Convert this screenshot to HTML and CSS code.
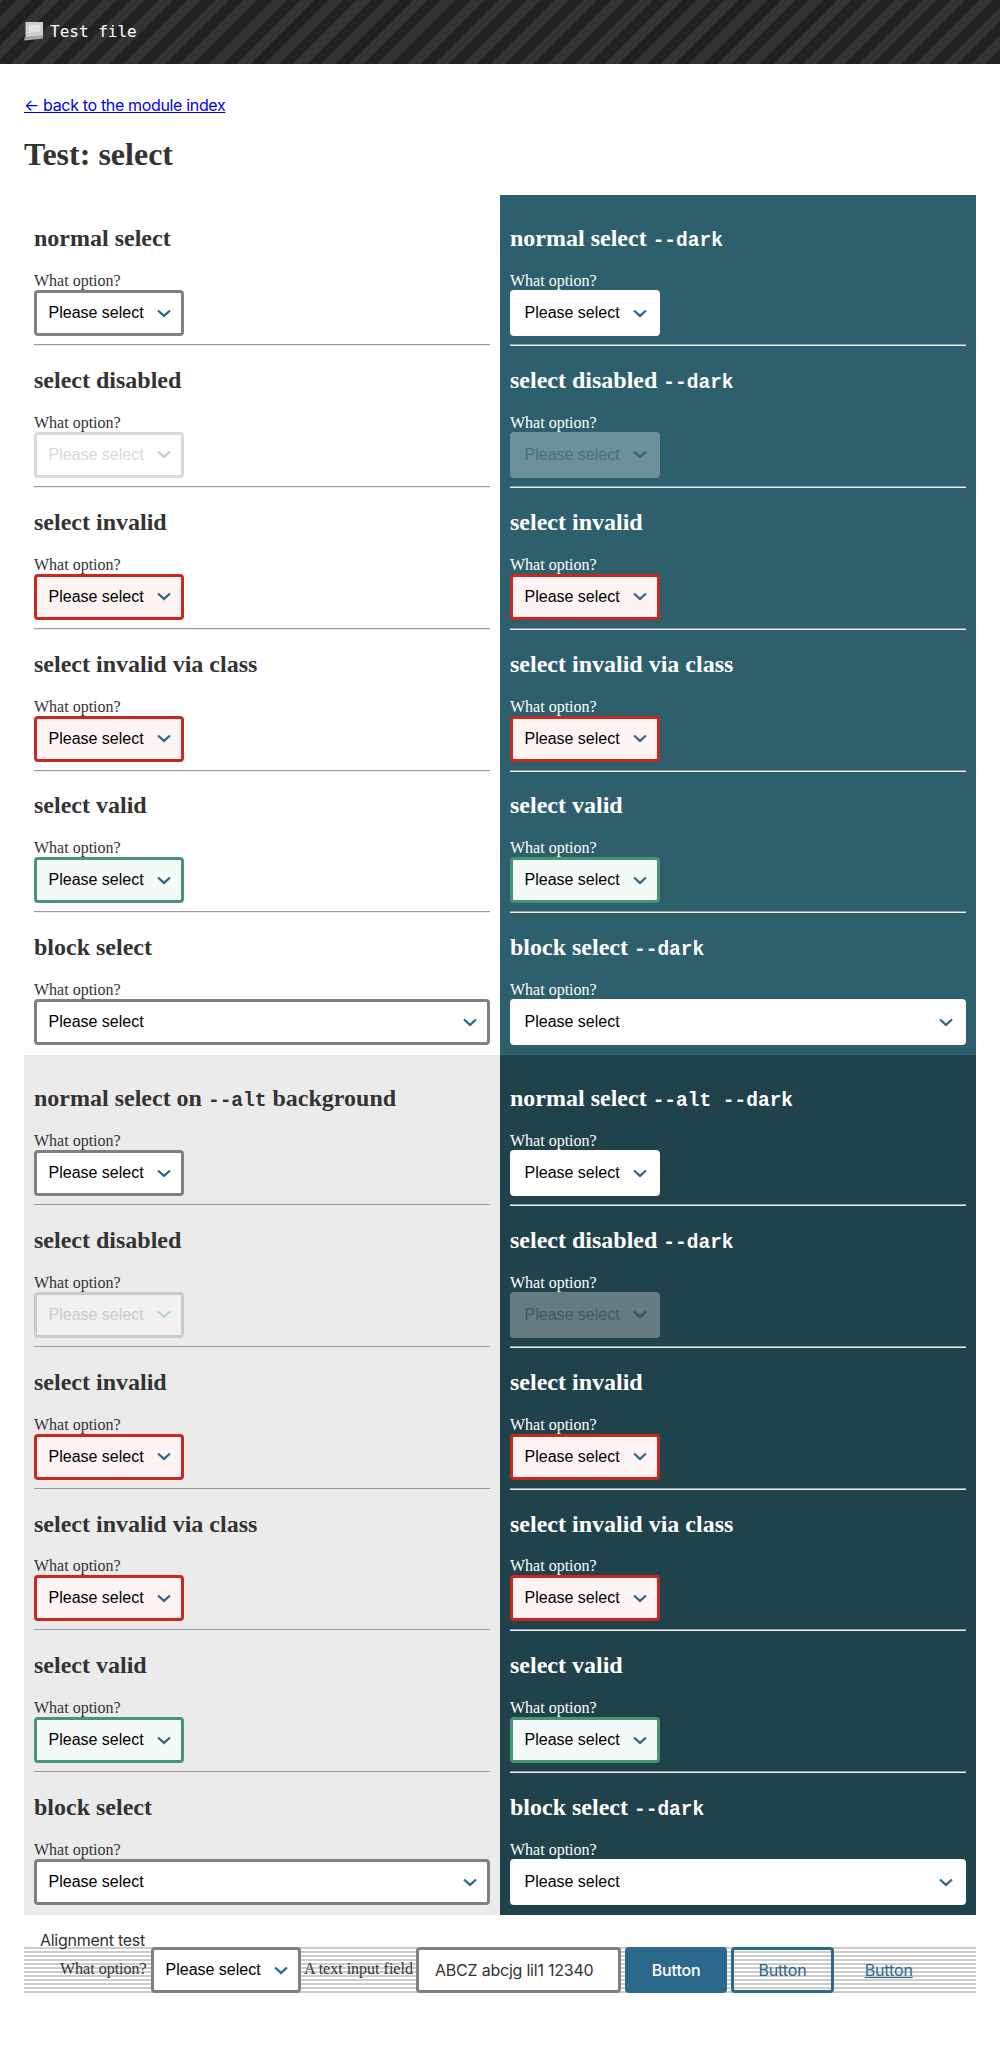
FILE: index.html
```html
<!DOCTYPE html>
<html lang="en">
<head>
<meta charset="utf-8">
<title>Test: select</title>
<link rel="stylesheet" href="styles.css">
</head>
<body>
<header class="banner">
  <svg class="banner-icon" viewBox="0 0 20 20" aria-hidden="true"><path d="M1.5 1h17.500v14L1.500 16z" fill="#d2d2d2"/><path d="M4 3h13v8.500L4 12.500z" fill="#e2e2e2" stroke="#c3c3c3"/><path d="M.5 16.500L19 13.500v4L.5 19.500z" fill="#b0b0b0"/><path d="M.5 18l18.500-2.500" stroke="#999"/></svg>
  <span>Test file</span>
</header>
<main class="page">
  <a class="back" href="#">← back to the module index</a>
  <h1>Test: select</h1>
  <div class="grid">
    <section class="cell">
      <h2>normal select</h2><label>What option?</label><select class="select"><option>Please select</option></select><hr>
      <h2>select disabled</h2><label>What option?</label><select class="select" disabled><option>Please select</option></select><hr>
      <h2>select invalid</h2><label>What option?</label><select class="select invalid"><option>Please select</option></select><hr>
      <h2>select invalid via class</h2><label>What option?</label><select class="select invalid"><option>Please select</option></select><hr>
      <h2>select valid</h2><label>What option?</label><select class="select valid"><option>Please select</option></select><hr>
      <h2>block select</h2><label>What option?</label><select class="select block"><option>Please select</option></select>
    </section>
    <section class="cell dark">
      <h2>normal select <code>--dark</code></h2><label>What option?</label><select class="select"><option>Please select</option></select><hr>
      <h2>select disabled <code>--dark</code></h2><label>What option?</label><select class="select" disabled><option>Please select</option></select><hr>
      <h2>select invalid</h2><label>What option?</label><select class="select invalid"><option>Please select</option></select><hr>
      <h2>select invalid via class</h2><label>What option?</label><select class="select invalid"><option>Please select</option></select><hr>
      <h2>select valid</h2><label>What option?</label><select class="select valid"><option>Please select</option></select><hr>
      <h2>block select <code>--dark</code></h2><label>What option?</label><select class="select block"><option>Please select</option></select>
    </section>
    <section class="cell alt">
      <h2>normal select on <code>--alt</code> background</h2><label>What option?</label><select class="select"><option>Please select</option></select><hr>
      <h2>select disabled</h2><label>What option?</label><select class="select" disabled><option>Please select</option></select><hr>
      <h2>select invalid</h2><label>What option?</label><select class="select invalid"><option>Please select</option></select><hr>
      <h2>select invalid via class</h2><label>What option?</label><select class="select invalid"><option>Please select</option></select><hr>
      <h2>select valid</h2><label>What option?</label><select class="select valid"><option>Please select</option></select><hr>
      <h2>block select</h2><label>What option?</label><select class="select block"><option>Please select</option></select>
    </section>
    <section class="cell dark alt">
      <h2>normal select <code>--alt --dark</code></h2><label>What option?</label><select class="select"><option>Please select</option></select><hr>
      <h2>select disabled <code>--dark</code></h2><label>What option?</label><select class="select" disabled><option>Please select</option></select><hr>
      <h2>select invalid</h2><label>What option?</label><select class="select invalid"><option>Please select</option></select><hr>
      <h2>select invalid via class</h2><label>What option?</label><select class="select invalid"><option>Please select</option></select><hr>
      <h2>select valid</h2><label>What option?</label><select class="select valid"><option>Please select</option></select><hr>
      <h2>block select <code>--dark</code></h2><label>What option?</label><select class="select block"><option>Please select</option></select>
    </section>
  </div>
  <p class="align-title">Alignment test</p>
  <div class="align-row">
    <label class="option-label">What option?</label>
    <select class="select"><option>Please select</option></select>
    <label class="input-label">A text input field</label>
    <input class="text-input" type="text" value="ABCZ abcjg lil1 12340">
    <button class="button primary">Button</button>
    <button class="button secondary">Button</button>
    <button class="button tertiary">Button</button>
  </div>
</main>
</body>
</html>
```
FILE: styles.css
```css
* { box-sizing: border-box; }

body {
  margin: 0;
  background: #fff;
  color: #333;
  font: 16px/19px "Liberation Serif", "Times New Roman", serif;
}

.banner {
  display: flex;
  align-items: center;
  gap: 6px;
  height: 64px;
  padding: 0 24px 1px;
  color: #fff;
  font: 16px/20px "DejaVu Sans Mono", monospace;
  background: repeating-linear-gradient(-45deg, #222 0 10px, #333 10px 20px);
}

.banner-icon { width: 20px; height: 20px; margin-bottom: 2px; }

.page { padding: 31px 24px 0; }

.back {
  display: block;
  width: max-content;
  color: #0000ee;
  font: 16px/20px Inter, sans-serif;
  letter-spacing: -0.34px;
}

h1 {
  margin: 21px 0 22px;
  font-size: 32px;
  line-height: 37px;
}

.grid {
  display: grid;
  grid-template-columns: 1fr 1fr;
  height: 1720px;
}

.cell { padding: 10px; }
.cell.alt { background: #ebebeb; }
.cell.dark { color: #fff; background: #2d5f6d; }
.cell.dark.alt { background: #20424b; }

.cell label { display: block; }

h2 {
  margin: 20.92px 0 18.92px;
  font-size: 24px;
  line-height: 27px;
}

h2:first-child { margin-top: 20.2px; }
.alt h2:first-child { margin-top: 19.95px; }

code {
  font: bold 19.5px/20px "Liberation Mono", "Courier New", monospace;
}

hr {
  height: 2px;
  margin: 8px 0 0;
  border: 0 solid #ededed;
  border-top-color: #9a9a9a;
  border-width: 1px 0;
}

.select {
  display: block;
  width: 150px;
  height: 46px;
  margin: 0;
  padding: 0 11.5px;
  border: 3px solid #808080;
  border-radius: 4px;
  color: #000;
  font: 16px/20px "Liberation Sans", Arial, sans-serif;
  appearance: none;
  background: #fff url("data:image/svg+xml,%3Csvg xmlns='http://www.w3.org/2000/svg' width='14' height='9' viewBox='0 0 14 9'%3E%3Cpath d='M1 1.5l6 5.4 6-5.4' fill='none' stroke='%232b688c' stroke-width='2.2'/%3E%3C/svg%3E") no-repeat right 10px center;
}

.select.block { width: 100%; }
.select.invalid { border-color: #c8281e; background-color: #fcf3f2; }
.select.valid { border-color: #459671; background-color: #f4faf8; }
.select:disabled {
  opacity: 1;
  border-color: #d9d9d9;
  color: #d9d9d9;
  background-image: url("data:image/svg+xml,%3Csvg xmlns='http://www.w3.org/2000/svg' width='14' height='9' viewBox='0 0 14 9'%3E%3Cpath d='M1 1.5l6 5.4 6-5.4' fill='none' stroke='%23bfd1dd' stroke-width='2.2'/%3E%3C/svg%3E");
}
.alt .select:disabled { border-color: #cbcbcb; color: #cbcbcb; background-color: #f1f1f1; }

.dark .select:not(.invalid):not(.valid) { border-color: #fff; }
.dark .select:disabled:disabled:disabled {
  border-color: #6c8f99;
  background-color: #6c8f99;
  color: #4b707a;
  background-image: url("data:image/svg+xml,%3Csvg xmlns='http://www.w3.org/2000/svg' width='14' height='9' viewBox='0 0 14 9'%3E%3Cpath d='M1 1.5l6 5.4 6-5.4' fill='none' stroke='%232c6480' stroke-width='2.2'/%3E%3C/svg%3E");
}
.dark.alt .select:disabled:disabled:disabled {
  border-color: #637b81;
  background-color: #637b81;
  color: #425b63;
  background-image: url("data:image/svg+xml,%3Csvg xmlns='http://www.w3.org/2000/svg' width='14' height='9' viewBox='0 0 14 9'%3E%3Cpath d='M1 1.5l6 5.4 6-5.4' fill='none' stroke='%2326556c' stroke-width='2.2'/%3E%3C/svg%3E");
}

.align-title {
  margin: 15px 0 0 16px;
  font: 16px/20px Inter, sans-serif;
  letter-spacing: -0.27px;
}

.align-row {
  display: flex;
  align-items: center;
  height: 46px;
  margin-top: -3px;
  padding-left: 36px;
  background: repeating-linear-gradient(#ccc 0 2px, #fff 2px 4px);
}

.option-label, .input-label { padding-bottom: 3px; white-space: nowrap; }
.option-label { width: 91px; }
.input-label { width: 115px; padding-left: 3px; }

.text-input {
  width: 205px;
  height: 46px;
  padding: 0 16px;
  border: 3px solid #808080;
  border-radius: 4px;
  color: #333;
  background: #fff;
  font: 16px/20px Inter, sans-serif;
  letter-spacing: -0.22px;
}

.button {
  width: 102.3px;
  height: 46px;
  margin-left: 4px;
  padding: 0;
  border: 3px solid transparent;
  border-radius: 4px;
  color: #2b688c;
  background: none;
  font: 16px/20px Inter, sans-serif;
  letter-spacing: -0.15px;
}

.button.primary { border-color: #2b688c; background: #2b688c; color: #fff; font-weight: 500; }
.button.secondary { border-color: #2b688c; }
.button.tertiary { text-decoration: underline; }
```
